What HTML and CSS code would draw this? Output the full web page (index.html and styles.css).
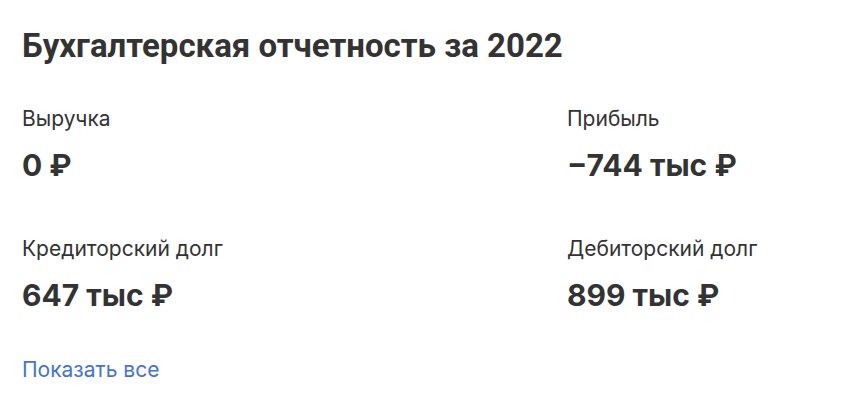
FILE: index.html
```html
<!DOCTYPE html>
<html lang="ru">
<head>
<meta charset="utf-8">
<link rel="stylesheet" href="styles.css">
</head>
<body>
<section class="card">
  <h2 class="title">Бухгалтерская отчетность за 2022</h2>
  <div class="grid">
    <div class="item">
      <div class="label">Выручка</div>
      <div class="value">0 ₽</div>
    </div>
    <div class="item">
      <div class="label">Прибыль</div>
      <div class="value">−744 тыс ₽</div>
    </div>
    <div class="item">
      <div class="label">Кредиторский долг</div>
      <div class="value">647 тыс ₽</div>
    </div>
    <div class="item">
      <div class="label">Дебиторский долг</div>
      <div class="value">899 тыс ₽</div>
    </div>
  </div>
  <a class="more" href="#">Показать все</a>
</section>
</body>
</html>
```

FILE: styles.css
```css
html, body {
  margin: 0;
  padding: 0;
  background: #ffffff;
}
.card {
  padding: 26px 22px 0 22px;
  color: #333333;
  font-family: Inter, "Noto Sans", sans-serif;
}
.title {
  margin: 0;
  font-family: Roboto, "Liberation Sans", sans-serif;
  font-weight: 700;
  font-size: 33px;
  line-height: 40px;
  color: #333333;
}
.grid {
  display: grid;
  grid-template-columns: 545px 1fr;
  row-gap: 53px;
  margin-top: 40px;
}
.label {
  font-size: 21px;
  line-height: 26px;
}
.value {
  margin-top: 15px;
  font-size: 30px;
  font-weight: 700;
  line-height: 36px;
}
.more {
  display: inline-block;
  margin-top: 44px;
  font-size: 21px;
  line-height: 26px;
  color: #4273d9;
  text-decoration: none;
}
```
